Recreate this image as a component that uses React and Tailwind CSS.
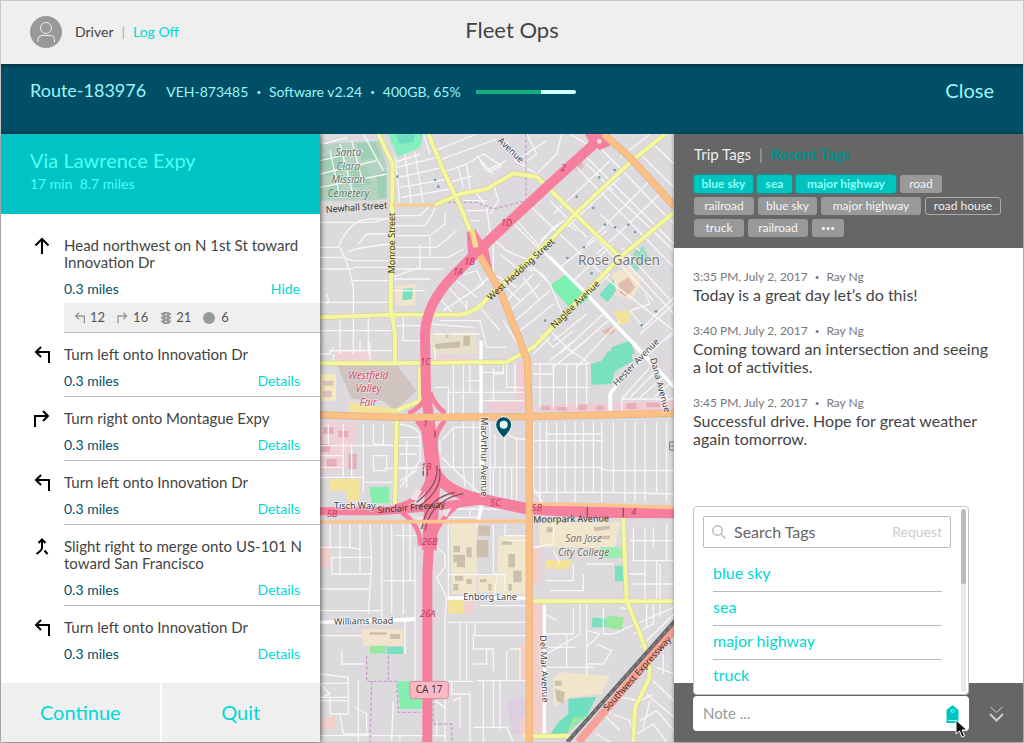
import React from 'react';
import { clsx } from 'clsx';

const directions = [
  {
    turn: 'straight',
    text: 'Head northwest on N 1st St toward Innovation Dr',
    action: 'Hide',
    stats: true,
  },
  { turn: 'left', text: 'Turn left onto Innovation Dr' },
  { turn: 'right', text: 'Turn right onto Montague Expy' },
  { turn: 'left', text: 'Turn left onto Innovation Dr' },
  { turn: 'merge', text: 'Slight right to merge onto US-101 N toward San Francisco' },
  { turn: 'left', text: 'Turn left onto Innovation Dr' },
];

const turnPaths = {
  straight: 'M8 17V2M1.5 8.5L8 2L14.5 8.5',
  left: 'M15 17V6H2M7 1L2 6L7 11',
  right: 'M1 17V6H14M9 1L14 6L9 11',
  merge: 'M8 2V10Q8 12 2.500 16M4.500 5L8 1.500L11.500 5M10.500 12.500L13.500 16',
};

const tagRows = [
  [
    { label: 'blue sky', width: 'w-[59px]', kind: 'active' },
    { label: 'sea', width: 'w-[35px]', kind: 'active' },
    { label: 'major highway', width: 'w-[100px]', kind: 'active' },
    { label: 'road', width: 'w-[42px]' },
  ],
  [
    { label: 'railroad', width: 'w-[60px]' },
    { label: 'blue sky', width: 'w-[59px]' },
    { label: 'major highway', width: 'w-[100px]' },
    { label: 'road house', width: 'w-[76px]', kind: 'outline' },
  ],
  [
    { label: 'truck', width: 'w-[50px]' },
    { label: 'railroad', width: 'w-[60px]' },
    { label: '•••', width: 'w-[32px]', kind: 'more' },
  ],
];

const notes = [
  { time: '3:35 PM, July 2, 2017', text: 'Today is a great day let’s do this!' },
  { time: '3:40 PM, July 2, 2017', text: 'Coming toward an intersection and seeing a lot of activities.' },
  { time: '3:45 PM, July 2, 2017', text: 'Successful drive. Hope for great weather again tomorrow.' },
];

const TurnIcon = ({ turn, className }) => (
  <svg className={className} viewBox="0 0 17 18" fill="none" stroke="currentColor" strokeWidth="2" aria-hidden="true">
    <path d={turnPaths[turn]} />
  </svg>
);

const TopBar = () => (
  <header className="grid h-[63px] shrink-0 grid-cols-[1fr_auto_1fr] items-center bg-[#efefef] px-[29px] pb-px">
    <div className="flex items-center text-sm text-[#444]">
      <svg className="mr-[13px] size-8" viewBox="0 0 32 32" fill="none" stroke="#eee" strokeWidth="1" aria-hidden="true">
        <circle cx="16" cy="16" r="16" fill="#999" stroke="none" />
        <circle cx="16" cy="12" r="5.500" />
        <path d="M8 26V23.500Q8 19.500 12 19.500H20.500Q24.500 19.500 24.500 23.500V26" />
      </svg>
      <span>Driver</span>
      <span className="mx-2 text-[#aaa]">|</span>
      <a href="#logoff" className="text-[#00d8d4]">Log Off</a>
    </div>
    <h1 className="pb-1 text-[22px] leading-6 text-[#444]">Fleet Ops</h1>
  </header>
);

const RouteBar = () => (
  <section className="z-10 flex h-[70px] shrink-0 items-start bg-[#004f66] px-[29px] pt-[14px] text-[#9af6fa] shadow-[inset_0_3px_3px_-1px_rgba(0,0,0,0.35)]">
    <h2 className="text-lg leading-6">Route-183976</h2>
    <div className="ml-5 flex items-center gap-2 text-sm leading-7">
      <span>VEH-873485</span>
      <span className="text-[8px]">•</span>
      <span>Software v2.24</span>
      <span className="text-[8px]">•</span>
      <span>400GB, 65%</span>
      <div className="ml-[7px] h-1 w-[100px] overflow-hidden rounded-full bg-[#d3ffff]" role="progressbar" aria-label="Storage used" aria-valuenow={65}>
        <div className="h-full w-[65%] bg-[#10b078]" />
      </div>
    </div>
    <button type="button" className="ml-auto text-xl leading-6">Close</button>
  </section>
);

const Stats = () => (
  <div className="flex h-[29px] items-center gap-3 bg-[#efefef] pl-[10px] text-[13px] text-[#555]">
    <span className="flex items-center gap-1">
      <TurnIcon turn="left" className="size-3 text-[#999]" />12
    </span>
    <span className="flex items-center gap-1">
      <TurnIcon turn="right" className="size-3 text-[#999]" />16
    </span>
    <span className="flex items-center gap-1">
      <svg className="size-3" viewBox="0 0 12 12" fill="#999" aria-hidden="true">
        <path d="M3 0H9V1H11.500L10 3.500H9V4.500H11.500L10 7.500H9V8.500H11.500L10 11H9V12H3V11H2L.5 8.500H3V7.500H2L.5 4.500H3V3.500H2L.5 1H3Z" />
        <path d="M5 2H7V3H5ZM5 5.500H7V6.500H5ZM5 9H7V10H5Z" fill="#efefef" />
      </svg>
      21
    </span>
    <span className="flex items-center gap-[6px]">
      <span className="size-3 rounded-full bg-[#999]" />6
    </span>
  </div>
);

const Directions = () => (
  <aside className="z-10 flex w-[319px] shrink-0 flex-col bg-white shadow-[1px_0_5px_rgba(0,0,0,0.6)]">
    <div className="h-20 bg-[#00c4c3] px-[29px] pt-[14px] text-[#4dfff6]">
      <h2 className="text-xl leading-6">Via Lawrence Expy</h2>
      <p className="text-sm leading-6">17 min&nbsp; 8.7 miles</p>
    </div>
    <ol className="flex-1 pt-[10px] text-[#444]">
      {directions.map((step, i) => (
        <li key={i} className="flex">
          <TurnIcon turn={step.turn} className="mt-[13px] mr-[13px] ml-[33px] h-[18px] w-[17px] shrink-0 text-black" />
          <div className={clsx('flex-1', i < directions.length - 1 && 'border-b border-[#bbb]')}>
            <p className="pt-[13px] pr-4 text-[15px] leading-[17px]">{step.text}</p>
            <div className={clsx('mt-2 flex justify-between pr-5 text-sm leading-5', step.stats ? 'pb-1' : 'pb-[5px]')}>
              <span className="text-[#004f66]">0.3 miles</span>
              <button type="button" className="text-[#00d8d4]">{step.action || 'Details'}</button>
            </div>
            {step.stats && <Stats />}
          </div>
        </li>
      ))}
    </ol>
    <div className="grid h-[59px] grid-cols-2 gap-[2px] text-xl text-[#00d8d4]">
      <button type="button" className="bg-[#efefef] pb-[2px]">Continue</button>
      <button type="button" className="bg-[#efefef] pb-[2px]">Quit</button>
    </div>
  </aside>
);

const parks = [
  { fill: '#b4d3c0', d: 'M0 30L175 20L200 90V195L150 200H0Z' },
  { fill: '#9fcfb4', d: 'M0 70L60 60L75 110L20 130ZM90 110L140 95L155 150L100 160ZM20 150L60 145L65 190H20ZM110 30L165 25L180 70L125 80ZM170 120L200 110V190L175 195Z' },
  { fill: '#86efc0', d: 'M205 0H310L300 40L235 70L215 30Z' },
  { fill: '#6fdcc0', d: 'M225 0H285L280 25L240 30Z' },
  { fill: '#7bf0b0', d: 'M690 455L745 415L812 490L755 528Z' },
  { fill: '#79e0c0', d: 'M838 482L880 435L888 470L862 505Z' },
  { fill: '#9addc4', d: 'M945 350L970 335L985 370L950 415L930 390Z' },
  { fill: '#79e0c0', d: 'M248 465L278 462L276 496L248 498Z' },
  { fill: '#79e0c0', d: 'M875 640L930 620L945 660H870Z' },
  { fill: '#79e0c0', d: 'M812 690L845 680L865 650L885 660L925 635L940 680L885 712L875 750L815 752Z' },
  { fill: '#86efb0', d: 'M148 1058H208V1108H155Z' },
  { fill: '#86efb0', d: 'M232 1642H305V1725H240Z' },
  { fill: '#79e0c0', d: 'M885 1295H915V1342H885Z' },
  { fill: '#9aefb0', d: 'M840 1240H912V1272H850Z' },
  { fill: '#9ae8a0', d: 'M150 1535H198V1558H150Z' },
  { fill: '#79e0c0', d: 'M200 1538H250V1560H200Z' },
  { fill: '#79e0c0', d: 'M818 1450L860 1455L855 1480H815Z' },
  { fill: '#9ae8a0', d: 'M860 1445L912 1450L905 1488L855 1480Z' },
  { fill: '#6fdfc0', d: 'M745 1695L830 1688L800 1745L735 1802H690L715 1765L745 1740Z' },
  { fill: '#9ae8a0', d: 'M760 1750H790L740 1800Z' },
];

const blocks = [
  { fill: '#cfc4c0', d: 'M50 692H230L290 770L225 830L190 800L95 795Z' },
  { fill: '#e8dfcc', d: 'M330 600L465 590L475 660H335Z' },
  { fill: '#c9bfa8', d: 'M370 597H395V603H385V612H378V603H370ZM345 630L420 622V640L345 645ZM430 605H450V635H430Z' },
  { fill: '#f0e5cc', d: 'M225 455L290 450L285 515H230Z' },
  { fill: '#f5e9c0', d: 'M0 720H48V800H0Z' },
  { fill: '#e0bfc0', d: 'M10 740H40V755H10ZM10 770H35V790H10Z' },
  { fill: '#f0d2d6', d: 'M45 650H160V685H45ZM340 670L450 665V685L345 688Z' },
  { fill: '#f0ccd2', d: 'M650 812L1062 802V832H650Z' },
  { fill: '#e6aeb8', d: 'M665 815H690V828H665ZM710 818H740V830H710ZM775 812H800V828H775ZM830 815H850V828H830ZM920 808H950V825H920ZM980 806H1020V820H980Z' },
  { fill: '#f0ccd2', d: 'M500 805H612V832H500ZM590 680H610V810L590 815Z' },
  { fill: '#f0d2d6', d: 'M0 865H110L105 945L75 955V1010H0Z' },
  { fill: '#e6aeb8', d: 'M10 880H40V900H10ZM55 890H85V910H55ZM5 930H30V955H5ZM85 960H110V1005H85ZM20 975H50V1000H20Z' },
  { fill: '#f3e39a', d: 'M90 805L235 825L225 840H90ZM30 1035H120V1100H80V1070H30ZM675 1278H755L748 1305H680Z' },
  { fill: '#f3e39a', d: 'M385 1398H430V1440H385ZM425 1170H460V1230H425ZM880 530H930V560L900 575ZM595 1340H622V1380H595Z' },
  { fill: '#efe6cc', d: 'M390 1170L470 1165V1380H395ZM535 1205H620V1380H530ZM475 1325H525V1375H475Z' },
  { fill: '#efe6cc', d: 'M655 1165H900L885 1240H660ZM720 1615L870 1625L845 1680L750 1690L700 1720V1630Z' },
  { fill: '#f3e3cc', d: 'M875 420L930 395L965 440L935 500L880 480ZM125 1485H250V1535H130Z' },
  { fill: '#cbbfae', d: 'M470 1218H505V1270H470ZM400 1235H420V1255H400ZM400 1262H435V1300H410V1285H400ZM440 1240H455V1270H440ZM565 1260H585V1300H565ZM580 1310H605V1345H580ZM565 1350H575V1370H565Z' },
  { fill: '#cbbfae', d: 'M405 1325H430V1340H405ZM400 1350H415V1370H400ZM440 1335H455V1350H440ZM480 1335H500V1345H480ZM505 1350H515V1370H505ZM475 1175H510V1205H475ZM545 1222H575V1232H545Z' },
  { fill: '#cbbfae', d: 'M680 1180H700V1195H680ZM820 1180L870 1175V1185L825 1192ZM845 1205H870V1215H845ZM705 1640H725V1655H705ZM705 1665L735 1675L730 1710L710 1700ZM150 1495H200V1502H150ZM210 1500H240V1515H210Z' },
  { fill: '#e0bcae', d: 'M895 450L925 430L945 460L920 488L900 478ZM845 590L880 575L885 595L860 605ZM760 95L785 82L792 98L770 110Z' },
  { fill: '#ddcfdf', d: 'M560 1700L622 1690V1800H575Z' },
  { fill: '#f2cfcf', d: 'M635 1240H665V1350H635ZM595 1530H622V1640H595ZM640 1400H668V1800H640ZM430 1400H462V1440H430ZM600 1750H620V1800H600Z' },
  { fill: '#f1d0cc', d: 'M0 1240L30 1230V1300H0ZM5 1755L45 1745V1785H5Z' },
];

// residential streets, grouped by neighbourhood
const streets = [
  'M0 265H160L215 250M0 340H55Q90 250 160 255H215M60 340Q90 400 100 460V545M115 330L140 300H215M85 355Q105 340 215 330M0 370H65L100 380H215M100 400H215M100 440H215M0 405H100M0 505H210M20 480Q30 505 20 510M100 460V545M0 590H215M60 545V660M100 548V660M145 548V660M25 650H145M0 600V640',
  'M225 245H300L330 215M220 275H315Q340 240 345 220M218 305H330L375 270V235M218 340H350L410 290M218 370H385L430 345M220 405H370M220 435H330M220 470H315M225 545V600M250 545V620H330M218 575H310M330 310V365M300 330V400L215 430',
  'M30 50L60 190M60 30L100 185M95 20L130 150M0 80L130 50M0 120L170 80M0 160L200 120M130 0L190 110M10 30L80 10M210 90L300 60M225 70L240 210M255 60L275 215M285 55L310 210M230 100L350 70M235 130L370 100M240 160L385 135M310 0L330 60M245 190L390 165',
  'M345 50L470 0M355 80L530 15M370 115L440 90L490 60L545 95M385 145L460 125M440 90L450 165M415 100L430 160M480 80L500 110L560 80M460 165L500 220L510 300M520 150L535 200L510 240M470 65L520 120M545 95L505 115M560 20L585 80L650 120M620 0L650 60L610 90M595 75L680 20M725 0L710 60L655 115M750 0L800 30',
  'M430 200H500M440 230H500M450 260H480M500 300L560 350L630 380M520 330V420L470 460M540 360L600 410L640 400L680 440M520 420L590 460M535 440L600 500M560 500L640 420M570 530L660 450M585 560L690 470M600 590L700 510M610 430L660 500M660 320L730 260L770 290M630 410Q660 400 690 450L730 545',
  'M345 500L400 430L470 410L490 450L430 490L370 530M385 460L440 520M410 440L470 490M365 500L400 540M440 500V545M360 560H480L500 640H560M340 600H480M330 570L460 580M480 520L540 590M550 560L600 640',
  'M590 260L690 370L800 480L970 660M560 250L800 480M635 220L740 320L880 450L1062 590M690 155L760 90L835 0M700 170L1000 500M760 90L1062 400M790 60L1062 330M820 20L1062 270M850 150L1062 350M840 240L960 350M700 240L870 80M740 280L900 130M800 330L1000 130M830 360L1030 170M870 400L1062 230M880 170L800 90M690 200L800 310M960 60L1062 160M1000 30L1062 90M990 0L900 70M660 330L700 280L750 250M720 400L860 290M760 440L880 330M800 480L870 420',
  'M895 360L1062 540M905 340L1062 510M930 530L990 510L975 480M930 530L970 580L1062 490M960 600L1062 510M700 620L800 540M720 660L850 540M750 660L870 555M660 600L700 640L760 590M640 660L690 610M770 700L900 560M690 590L760 660M970 660L1062 600M945 640L1000 700',
  'M400 690V840M430 690V840M483 620V842M520 700V805M550 680V720H520M385 775H610M440 740H480M483 800H610M450 690V775M560 690V760H610M585 690V775M345 760H385V840M483 715H550M345 640V690M640 690H800V810M660 690V820M700 690V820M740 690V820M770 690V820M640 760H810M640 720H700M810 690L740 640M690 680L760 620M700 700L810 610',
  'M875 830V780L900 740L1062 590M905 830V795H1062M905 795L990 700M930 790L1010 710M960 790L1030 730M1000 790L1062 740M1040 830V780',
  'M640 865V1060L670 1110M660 865V1105M680 865V1075M710 865V1105M735 865V1075M765 865V1105M790 865V1075M820 865V1075M845 865V1105M880 865V1075M915 865V1105M945 865V1105M975 865V1105M1010 865V1075M1040 865V1105M640 920H850M360 1000H840L860 1010H1062M640 1075H870M870 1075L1062 1080M680 900H845',
  'M240 870Q300 880 300 910V980L240 1060M365 920L400 880H480M400 880V1000M430 865V1000M460 865V1080M510 865V1080M540 1000V1090M525 900V1000M555 900V1100M590 910V1100M365 970L490 1090M360 920V960M590 915H640M560 860V900L590 915M430 1000L435 1060M490 860V1090L475 1160M520 1000V1090M575 1000V1100',
  'M230 910H300M230 935H300M260 920V1060M230 1000H300M160 965H200V1010H160ZM190 1003H290M240 960H290M130 1045H220V1080M130 930V1075M70 870V1030M0 935H225M0 965H70M0 1030H130M130 870V935M160 870V930M190 870V930M25 870V935M95 930V1030M0 1000H65M160 930L225 935M240 1040L290 1010',
  'M40 660V690M30 650H220M150 625V690M120 620V650M0 660H30L40 640',
  'M30 1170V1240M60 1170V1320M90 1170V1240M120 1170V1320M150 1170L155 1290L145 1440M185 1170V1460M215 1170V1440M250 1170V1440M35 1270H155M0 1240H80L120 1245M35 1270V1320H155M0 1365H150M190 1340H285M270 1170V1340M225 1205H300M0 1430H185V1465M0 1462H270M285 1240V1640M255 1462V1560M0 1505H125M65 1550V1590H130M0 1620L85 1630V1648H0',
  'M350 1180V1240L375 1260V1300L350 1330L380 1390L375 1450V1824M385 1170V1400M520 1170V1320H530L525 1380M385 1322H555V1370M480 1415H622M385 1465H640M465 1465V1505H622M460 1500V1545H520V1610M460 1590H500V1545M470 1640H622M420 1465V1640M440 1465V1640M375 1642H460M395 1642V1680H450V1824M490 1642V1824M520 1642V1780H560L580 1824M540 1642V1790M570 1545H600V1640M560 1550V1640M400 1700L420 1690V1780M460 1780H560',
  'M385 1125V1150H480M385 1125H600M470 1160V1180M450 1130V1145M555 1170V1205H620M560 1220H620M640 1240L700 1230V1165',
  'M675 1420V1800M700 1250L720 1290M680 1340H760V1300M690 1370H790V1320M640 1240H660M675 1440L710 1460M680 1500H760V1420M680 1540H770M740 1500V1600M680 1600H820M800 1405V1620M800 1490L840 1500L800 1540M850 1420V1500H880L1062 1420M830 1530L875 1550L850 1590H800M900 1420L940 1430M960 1540L1062 1440M940 1500L1000 1470V1405M1020 1405V1450M980 1405V1480M800 1290H880M760 1290V1320M780 1405V1500L680 1560',
  'M930 1220H1062M940 1180V1280H1062M975 1180V1400M1010 1280V1400M1040 1170V1280M1000 1180V1240M1020 1290V1400M930 1320H975M940 1350H1062',
  'M860 1720L900 1690L960 1700L1000 1680M880 1740L930 1760L940 1800M800 1780L850 1740L900 1790M980 1680L1062 1750M960 1760L1010 1730L1062 1790M1000 1640L1062 1700M1010 1600L1062 1620M1030 1560V1620M950 1800L1000 1770L1040 1824M830 1800L870 1824M870 1700V1740M990 1700L970 1780',
  'M0 1650L30 1680L0 1690M85 1630V1740M115 1640V1824M0 1690H85M30 1690V1740H85M0 1700L80 1700M220 1700L215 1820M60 1745L70 1800H150M0 1805H375M240 1805V1824M345 1700L375 1720M350 1760V1805M340 1645H375M105 1720L140 1740V1805',
];

const yellowRoads = [
  'M175 0L218 90L215 330L212 520L225 600V690',
  'M325 0L370 110L420 215L455 300',
  'M345 213L420 180L500 165L580 118L650 128L765 240L900 370',
  'M1035 0L930 85L765 240L700 310L500 495Q470 535 420 542H220L0 550',
  'M1062 235L900 370L640 640L560 684L230 688H0',
  'M300 700V800L230 830M230 858L225 1110',
  'M908 1118L920 1400L960 1500Q1000 1600 985 1640L945 1720L940 1824',
  'M630 1402H1062M610 1807L750 1806',
];

const orangeRoads = [
  'M480 365L540 470L600 620L622 680L628 860V1824',
  'M0 843L240 850L620 848L1062 838',
  'M850 0L930 70L1062 215',
];

const mapLabels = [
  { text: 'Avenue', x: 532, y: 22, rotate: 44 },
  { text: 'Newhall Street', x: 18, y: 236, rotate: -4, dark: true },
  { text: 'Monroe Street', x: 224, y: 418, rotate: -90, dark: true },
  { text: 'West Hedding Street', x: 512, y: 500, rotate: -42, dark: true },
  { text: 'Naglee Avenue', x: 703, y: 584, rotate: -44, dark: true },
  { text: 'Hester Avenue', x: 890, y: 758, rotate: -46 },
  { text: 'Dana Avenue', x: 990, y: 674, rotate: 75 },
  { text: 'MacArthur Avenue', x: 482, y: 850, rotate: 90 },
  { text: 'Tisch Way', x: 42, y: 1126, rotate: 0 },
  { text: 'Sinclair Freeway', x: 173, y: 1138, rotate: -5, dark: true },
  { text: 'Moorpark Avenue', x: 640, y: 1166, rotate: -1, dark: true },
  { text: 'Enborg Lane', x: 430, y: 1397, rotate: 0 },
  { text: 'Williams Road', x: 42, y: 1472, rotate: -1 },
  { text: 'Del Mar Avenue', x: 660, y: 1504, rotate: 88 },
  { text: 'Southwest Expressway', x: 862, y: 1732, rotate: -48, dark: true },
];

const exits = [
  ['2', 722, 112], ['1D', 542, 277], ['1B', 432, 392], ['1A', 398, 422], ['1C', 300, 694],
  ['1', 308, 880], ['1B', 302, 1008], ['5B', 20, 1148], ['5C', 510, 1116], ['5B', 634, 1132],
  ['4', 934, 1144], ['26B', 305, 1234], ['26A', 300, 1450],
];

const places = [
  { lines: ['Santa', 'Clara', 'Mission', 'Cemetery'], x: 85, y: 66, fill: '#66786c' },
  { lines: ['Westfield', 'Valley', 'Fair'], x: 145, y: 734, fill: '#d0506a' },
  { lines: ['San Jose', 'City College'], x: 791, y: 1224, fill: '#777163' },
];

const RouteMap = () => (
  <main className="relative min-w-0 flex-1 overflow-hidden bg-[#dcdadd]">
    <svg className="h-full w-full" viewBox="0 0 1062 1824" preserveAspectRatio="xMidYMid slice" role="img" aria-label="Route map">
      <rect width="1062" height="1824" fill="#dcdadd" />
      {blocks.map((b) => <path key={b.d} d={b.d} fill={b.fill} />)}
      {parks.map((p) => <path key={p.d} d={p.d} fill={p.fill} />)}
      <g fill="none" strokeLinejoin="round">
        <g stroke="#f8f7f8" strokeWidth="4">
          {streets.map((d) => <path key={d} d={d} />)}
        </g>
        <g stroke="#fff" strokeWidth="10">
          <path d="M690 370L800 480L970 660M483 620V1000M490 1000V1090L475 1160M0 1465L285 1455M385 1392H622M673 1412V1800M870 830V780L900 740M935 620L1062 760" />
        </g>
        <path d="M618 0V200L520 225L470 205H380M140 1565V1642H230L235 1735H300M205 1565V1640M155 1642L150 1824M340 1690V1770H395V1824" stroke="#c9a0cc" strokeWidth="4" strokeDasharray="10 6" />

        <g stroke="#d3d396" strokeWidth="16">
          {yellowRoads.map((d) => <path key={d} d={d} />)}
        </g>
        <g stroke="#f4f79f" strokeWidth="12">
          {yellowRoads.map((d) => <path key={d} d={d} />)}
        </g>
        <path d="M218 213L345 213" stroke="#eed3a0" strokeWidth="12" />

        {/* freeways */}
        <g stroke="#f77f9e">
          <path d="M850 5L690 150L480 345L400 425Q318 510 315 600L318 780L328 858L335 1018L335 1138L326 1248L322 1318V1824" strokeWidth="30" />
          <path d="M322 858L340 1010L328 1248" strokeWidth="44" />
          <path d="M345 1010Q370 1070 470 1093L620 1124L800 1134L1062 1136" strokeWidth="34" />
          <path d="M0 1132L180 1132L330 1120L480 1100" strokeWidth="24" />
          <path d="M325 1030Q310 1100 225 1118M300 1235Q305 1170 230 1125M335 1240Q345 1150 450 1090M320 775Q315 815 265 838M330 775Q345 815 375 838M375 860Q345 890 345 940M290 860Q320 890 320 940" strokeWidth="14" />
        </g>
        <path d="M795 0H870V35L840 48L810 28ZM440 295L465 285L490 325L505 345L518 412L480 370L445 375Z" fill="#f77f9e" />
        <g stroke="#8d5060" strokeWidth="4">
          <path d="M350 995Q360 1050 290 1105M358 1005Q370 1065 300 1115M305 1185Q320 1090 405 1075M315 1190Q330 1100 430 1078M310 1010V1025M322 1010V1025M345 890V910M802 1118V1150M910 1118V1150" />
        </g>
        <path d="M290 1062L305 1070L290 1100L272 1095ZM365 1140L395 1120L380 1150ZM280 1145L310 1150L305 1175Z" fill="#f3e3e6" />

        <g stroke="#e0b184" strokeWidth="22">
          {orangeRoads.map((d) => <path key={d} d={d} />)}
        </g>
        <g stroke="#fcbf86" strokeWidth="18">
          {orangeRoads.map((d) => <path key={d} d={d} />)}
        </g>
        <path d="M0 1164L620 1162M640 1110L800 1112L1062 1120" stroke="#fbc592" strokeWidth="11" />
        <path d="M455 285L468 340" stroke="#f6dc8d" strokeWidth="16" />

        <path d="M1070 1478L775 1824" stroke="#f8a09a" strokeWidth="24" />
        <path d="M1070 1455L742 1824" stroke="#666" strokeWidth="12" />
        <path d="M1070 1455L742 1824" stroke="#888" strokeWidth="4" strokeDasharray="14 10" />
      </g>
      <circle cx="838" cy="22" r="7" fill="#fbe5ea" />
      <g fill="#6f9fa8">
        {[[345, 138], [355, 158], [770, 188], [838, 130], [820, 222], [884, 108], [855, 272], [885, 280], [925, 272], [945, 294], [792, 340], [742, 372], [815, 418], [1008, 532], [675, 560], [965, 574], [232, 128]].map(([x, y]) => (
          <circle key={`${x}-${y}`} cx={x} cy={y} r="4" />
        ))}
      </g>

      <g fontFamily='"Noto Sans", sans-serif'>
        <g fontSize="27" strokeWidth="5" paintOrder="stroke" strokeOpacity="0.6">
          {mapLabels.map(({ text, x, y, rotate, dark }) => (
            <text
              key={text}
              transform={`translate(${x} ${y}) rotate(${rotate})`}
              fill={dark ? '#39391f' : '#444'}
              stroke={dark ? 'none' : '#fff'}
            >
              {text}
            </text>
          ))}
        </g>
        <g fontSize="28" fontStyle="italic" fill="#c23a5e">
          {exits.map(([text, x, y]) => <text key={`${text}-${y}`} x={x} y={y}>{text}</text>)}
        </g>
        <g fontSize="30" fontStyle="italic" textAnchor="middle" stroke="#fff" strokeWidth="4" strokeOpacity="0.5" paintOrder="stroke">
          {places.map((place) => (
            <text key={place.lines[0]} fill={place.fill}>
              {place.lines.map((line, i) => (
                <tspan key={line} x={place.x} y={place.y + i * 41}>{line}</tspan>
              ))}
            </text>
          ))}
        </g>
        <text x="774" y="393" fontSize="41" fill="#777" stroke="#fff" strokeWidth="5" strokeOpacity="0.6" paintOrder="stroke">Rose Garden</text>
        <rect x="270" y="1642" width="115" height="52" rx="8" fill="#fbb8c5" stroke="#d78a9b" strokeWidth="3" />
        <text x="327" y="1678" fontSize="30" fill="#4b3b40" textAnchor="middle">CA 17</text>
      </g>
      <path d="M1062 924H1049V948H1062M1052 936H1062" fill="none" stroke="#777" strokeWidth="3" />

      {/* current position */}
      <path d="M551 912Q527 888 527 872A24 24 0 0 1 575 872Q575 888 551 912Z" fill="#005066" stroke="#fff" strokeWidth="3" />
      <circle cx="551" cy="872" r="12" fill="#e9ffff" />
    </svg>
  </main>
);

const Tag = ({ label, width, kind }) => (
  <button
    type="button"
    className={clsx(
      'h-[18px] rounded-[3px] text-center leading-[16px]',
      width,
      kind === 'more' ? 'text-[8px]' : 'text-xs',
      kind === 'active' && 'bg-[#00c4c0] font-bold text-[#8ffffa] shadow-[0_0_2px_1px_rgba(0,170,165,0.7)]',
      kind === 'outline' && 'border border-[#aaa] text-[#eee]',
      (!kind || kind === 'more') && 'bg-[#999] text-[#f4f4f4]'
    )}
  >
    {label}
  </button>
);

const TagPicker = () => (
  <div className="absolute bottom-full left-0 mb-px flex w-full rounded-[4px] border border-[#c4c4c4] bg-white">
    <div className="flex-1 pt-[9px] pb-px pl-[9px]">
      <div className="flex h-8 items-center rounded-[2px] border border-[#bbb] px-2">
        <svg className="mr-2 size-[14px]" viewBox="0 0 14 14" fill="none" stroke="#bbb" strokeWidth="1.500" aria-hidden="true">
          <circle cx="5.500" cy="5.500" r="4.700" />
          <path d="M9 9L13.500 13.500" />
        </svg>
        <input
          type="text"
          aria-label="Search Tags"
          placeholder="Search Tags"
          className="w-0 flex-1 text-base outline-none placeholder:text-[#666]"
        />
        <button type="button" className="text-sm text-[#ccc]">Request</button>
      </div>
      <ul className="mt-[10px] mr-[9px] ml-[10px] text-base text-[#00d8d4]">
        {['blue sky', 'sea', 'major highway', 'truck'].map((tag) => (
          <li key={tag} className="border-b border-[#bbb] last:border-0">
            <button type="button" className="block h-[33px] w-full pb-1 text-left">{tag}</button>
          </li>
        ))}
      </ul>
    </div>
    <div className="mt-[2px] mr-[2px] mb-[2px] ml-[10px] w-[5px] rounded-full bg-[#e8e8e8]">
      <div className="h-[75px] rounded-full bg-[#bbb]" />
    </div>
  </div>
);

const NotesPanel = () => (
  <aside className="z-10 flex w-[349px] shrink-0 flex-col bg-white shadow-[0_0_4px_rgba(0,0,0,0.4)]">
    <div className="h-[114px] bg-[#666] pt-[10px] pl-5">
      <div className="flex items-center text-[15px] leading-5 text-[#eee]">
        <span>Trip Tags</span>
        <span className="mx-2 text-[#aaa]">|</span>
        <a href="#recent" className="font-bold text-[#008f8b]">Recent Tags</a>
      </div>
      <div className="mt-[11px] flex flex-col gap-1">
        {tagRows.map((row, i) => (
          <div key={i} className="flex gap-1">
            {row.map((tag) => <Tag key={tag.label} {...tag} />)}
          </div>
        ))}
      </div>
    </div>

    <div className="flex flex-1 flex-col gap-[18px] pt-5 pr-8 pl-[19px]">
      {notes.map((note) => (
        <article key={note.time}>
          <p className="flex h-[18px] items-center text-xs text-[#777]">
            {note.time}<span className="mx-[7px] text-[8px]">•</span>Ray Ng
          </p>
          <p className="text-base leading-[18px] text-[#444]">{note.text}</p>
        </article>
      ))}
    </div>

    <div className="flex h-[59px] items-start bg-[#666] pt-[13px] pr-[19px] pl-[19px]">
      <div className="relative flex h-[35px] flex-1 items-center rounded-[4px] bg-white px-[10px]">
        <TagPicker />
        <input
          type="text"
          aria-label="Note"
          placeholder="Note ..."
          className="w-0 flex-1 text-[15px] outline-none placeholder:text-[#999]"
        />
        <button type="button" aria-label="Tags">
          <svg className="h-[18px] w-[13px]" viewBox="0 0 13 18" aria-hidden="true">
            <path d="M6.500 0L12.500 5V18H.5V5Z" fill="#00c4c0" />
            <circle cx="6.500" cy="6" r="1.500" fill="#00c4c0" stroke="#7ffffa" />
            <path d="M2 15.500H11" stroke="#7ffffa" />
          </svg>
        </button>
        <svg className="absolute right-0 -bottom-[7px] h-[19px] w-[14px]" viewBox="0 0 14 19" aria-hidden="true">
          <path d="M1 1V15L4.500 12L7 18L9.500 17L7 11H12Z" fill="#111" stroke="#fff" />
        </svg>
      </div>
      <button type="button" aria-label="Collapse" className="mt-[10px] ml-5">
        <svg className="h-4 w-[15px]" viewBox="0 0 15 16" fill="none" stroke="#ccc" aria-hidden="true">
          <path d="M1.500 1L7.500 6.500L13.500 1" />
          <path d="M1 8L7.500 14.500L14 8" strokeWidth="2" />
        </svg>
      </button>
    </div>
  </aside>
);

const App = () => (
  <div className="flex min-h-screen flex-col border border-[#c8c8c8] font-['Lato',sans-serif]">
    <TopBar />
    <RouteBar />
    <div className="flex flex-1">
      <Directions />
      <RouteMap />
      <NotesPanel />
    </div>
  </div>
);

export default App;
